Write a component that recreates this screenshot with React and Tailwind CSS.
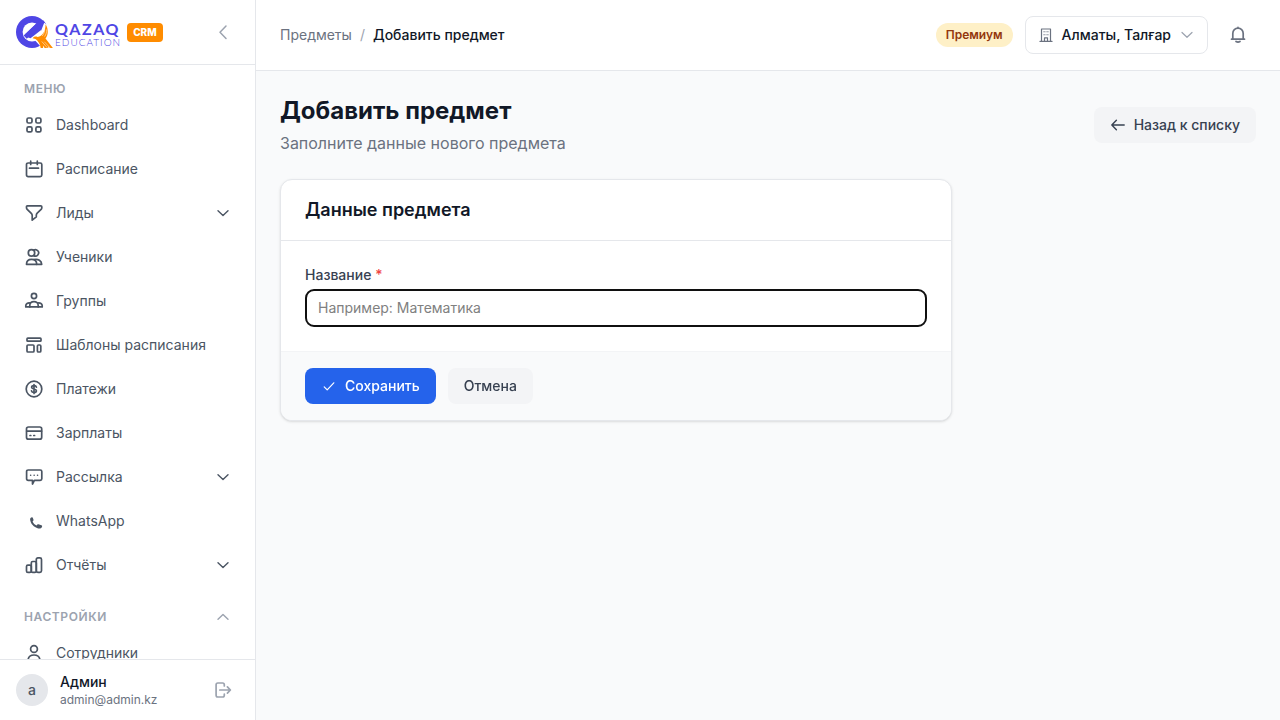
import { useState } from "react";

function Icon({ children, size = 20, className = "" }) {
  return (
    <svg
      width={size}
      height={size}
      viewBox={`0 0 ${size} ${size}`}
      fill="none"
      stroke="currentColor"
      strokeWidth={size === 20 ? 1.7 : 1.4}
      strokeLinecap="round"
      strokeLinejoin="round"
      aria-hidden="true"
      className={`shrink-0 ${className}`}
    >
      {children}
    </svg>
  );
}

const icons = {
  grid: (
    <>
      <rect x="3" y="3" width="5" height="5" rx="1.5" />
      <rect x="11.9" y="3" width="5" height="5" rx="1.5" />
      <rect x="3" y="11.9" width="5" height="5" rx="1.5" />
      <rect x="11.9" y="11.9" width="5" height="5" rx="1.5" />
    </>
  ),
  calendar: (
    <>
      <rect x="2.5" y="4" width="15.3" height="13.6" rx="1.6" />
      <path d="M6.7 2.2v3.3M13.3 2.2v3.3M5.5 9.2h9" />
    </>
  ),
  funnel: (
    <path d="M3.4 2.8h13.4q1 0 1 1v.9q0 1-.7 1.7l-3.9 3.7q-.9.9-.9 2.1v1.7L8.2 17.2v-4.7q0-1.2-.9-2.1L3.2 6.4q-.7-.7-.7-1.7v-.9q0-1 .9-1Z" />
  ),
  students: (
    <>
      <circle cx="7.5" cy="5.9" r="3.2" />
      <path d="M9.6 3.2a3.2 3.2 0 1 1 0 5.3" />
      <path d="M2.5 17.3c0-3.1 2.1-5 5.1-5s5.1 1.9 5.1 5Z" />
      <path d="M10.2 12.5c4-.8 7.4 1.2 7.5 4.8h-5" />
    </>
  ),
  groups: (
    <>
      <circle cx="10" cy="5" r="2.6" />
      <path d="M5.8 15.9v-1.5c0-2.2 1.7-3.7 4.2-3.7s4.2 1.5 4.2 3.7v1.5" />
      <path d="M6.3 12c-2.7-.5-4.5.7-4.5 2.7v1.2h16.4v-1.2c0-2-1.8-3.2-4.5-2.7" />
    </>
  ),
  template: (
    <>
      <rect x="3" y="3.2" width="14" height="3" rx=".8" />
      <rect x="3" y="10" width="7" height="7" rx="1" />
      <rect x="13.4" y="10" width="3.4" height="7" rx="1" />
    </>
  ),
  dollar: (
    <>
      <circle cx="10" cy="10" r="7.8" />
      <path d="M12.4 8.1c-.2-.9-1.1-1.5-2.4-1.5-1.4 0-2.4.6-2.4 1.6 0 2.3 4.8 1.2 4.8 3.5 0 1-1 1.7-2.4 1.7s-2.3-.6-2.5-1.6M10 5.5v9" />
    </>
  ),
  card: (
    <>
      <rect x="2.5" y="4" width="15.2" height="12.2" rx="2" />
      <path d="M2.7 8.2h14.8M6 12.5h.8M9.8 12.5h.8" />
    </>
  ),
  message: (
    <>
      <path d="M4.2 3h12q1.6 0 1.6 1.6v7.2q0 1.6-1.6 1.6h-5.8L8.5 17v-3.6H4.2q-1.6 0-1.6-1.6V4.6Q2.6 3 4.2 3Z" />
      <path d="M6.6 8.2h.1M10.1 8.2h.1M13.5 8.2h.1" strokeWidth="1.5" />
    </>
  ),
  phone: (
    <path
      d="M6.1 8.6C6 7.2 6.8 6.2 8 6.2c.5 0 .8.3.9.8l.6 1.7c.1.5 0 .8-.3 1.1l-.6.6c.8 1.8 2.1 3.2 4 4l.8-.8c.3-.3.7-.5 1.1-.3l2.9.9c.6.2.9.6.7 1.2-.4 1.7-2 2.5-4 2-4.3-1.1-7.5-4.5-8-8.8Z"
      fill="currentColor"
      stroke="none"
    />
  ),
  chart: (
    <>
      <rect x="2.5" y="10.2" width="4.8" height="7.2" rx="1.4" />
      <rect x="7.3" y="6.5" width="5" height="10.9" rx="1.4" />
      <rect x="12.3" y="2.8" width="5.2" height="14.6" rx="1.6" />
    </>
  ),
  user: (
    <>
      <circle cx="10" cy="6" r="3.4" />
      <path d="M4 17.2c.3-3.3 2.5-5.2 6-5.2s5.7 1.9 6 5.2" />
    </>
  ),
};

const menuItems = [
  { name: "Dashboard", icon: "grid" },
  { name: "Расписание", icon: "calendar" },
  { name: "Лиды", icon: "funnel", expandable: true },
  { name: "Ученики", icon: "students" },
  { name: "Группы", icon: "groups" },
  { name: "Шаблоны расписания", icon: "template" },
  { name: "Платежи", icon: "dollar" },
  { name: "Зарплаты", icon: "card" },
  { name: "Рассылка", icon: "message", expandable: true },
  { name: "WhatsApp", icon: "phone" },
  { name: "Отчёты", icon: "chart", expandable: true },
];

function Logo() {
  return (
    <a href="#" className="flex items-center gap-1.5">
      <span className="flex items-center gap-px">
        <svg width="38" height="32" viewBox="0 0 38 32" aria-hidden="true">
          <circle cx="16" cy="16" r="16" fill="#4f46e5" />
          <circle cx="16" cy="16" r="9.4" fill="#fff" />
          <path d="M27.5 4.6 31 9.5 14.5 22.2 9.3 20.5 9.2 18.2 21.6 6.2Z" fill="#4f46e5" />
          <path d="M28.2 6.8 38 13v19H26l-8.8-9.5 8-8Z" fill="#fff" />
          <path d="M9.2 21.2 21.5 9.6" stroke="#4f46e5" strokeWidth="4.6" />
          <path
            d="M29.6 8.2c2.8 4.5 3.1 10.2-.1 14.2L36.9 32h-3.1l-2.1-1.8.8 1.8h-3.8l-1.8-2.6.2 2.6h-2.4c-.4-3.8-2.3-6.8-5.2-9l-2.9-.8c1.1-1.6 3.1-2 5-1.2 4.8-1 7.9-5.6 8-12.8Z"
            fill="#ff8c00"
          />
          <path
            d="M28.7 13.2c.1 2.5-.9 5-2.5 6.8M30.7 13.4c.1 2.7-.6 5.1-2.1 7.2M25.8 25.5l5.6 6.4M28.3 25.7l5.8 6.2"
            stroke="#fff"
            strokeWidth=".5"
            fill="none"
          />
        </svg>
        <span className="flex flex-col pt-1 font-['Lato',sans-serif] text-[#4f46e5]">
          <span className="text-base leading-4 font-bold tracking-widest">QAZAQ</span>
          <span className="text-[10px] leading-[10px] font-light tracking-widest">EDUCATION</span>
        </span>
      </span>
      <span className="rounded bg-[#ff8c00] px-1.5 py-0.5 text-[10px] leading-[15px] font-extrabold text-white">
        CRM
      </span>
    </a>
  );
}

function NavItem({ name, icon, expandable }) {
  const content = (
    <>
      <Icon>{icons[icon]}</Icon>
      <span className="flex-1 text-left">{name}</span>
      {expandable && (
        <Icon size={16}>
          <path d="M3 5.7l5 4.8 5-4.8" />
        </Icon>
      )}
    </>
  );
  const classes =
    "flex h-10 w-full items-center gap-3 rounded-lg px-3 text-sm text-[#4b5563] hover:bg-gray-100";

  return (
    <li>
      {expandable ? (
        <button type="button" className={classes}>{content}</button>
      ) : (
        <a href="#" className={classes}>{content}</a>
      )}
    </li>
  );
}

function Sidebar() {
  const [settingsOpen, setSettingsOpen] = useState(true);

  return (
    <aside className="flex w-64 shrink-0 flex-col border-r border-[#e5e7eb] bg-white">
      <div className="flex h-[65px] shrink-0 items-center justify-between border-b border-[#e5e7eb] px-4">
        <Logo />
        <button type="button" aria-label="Свернуть меню" className="p-1.5 text-[#9ca3af]">
          <Icon>
            <path d="M13 4l-6 6.2 6 6.2" strokeWidth="1.5" />
          </Icon>
        </button>
      </div>

      <nav className="min-h-0 flex-1 overflow-y-auto px-3 py-4 [scrollbar-width:none]">
        <h2 className="mb-2 px-3 text-xs font-semibold tracking-wider text-[#9ca3af]">МЕНЮ</h2>
        <ul className="space-y-1">
          {menuItems.map((item) => (
            <NavItem key={item.name} {...item} />
          ))}
        </ul>

        <button
          type="button"
          onClick={() => setSettingsOpen(!settingsOpen)}
          className="mt-6 mb-2 flex w-full items-center justify-between px-3 text-xs font-semibold tracking-wider text-[#9ca3af]"
        >
          НАСТРОЙКИ
          <Icon size={16}>
            <path d="M3 10.3l5-4.8 5 4.8" />
          </Icon>
        </button>
        {settingsOpen && (
          <ul>
            <NavItem name="Сотрудники" icon="user" />
          </ul>
        )}
      </nav>

      <div className="flex shrink-0 items-center gap-3 border-t border-[#e5e7eb] px-4 py-3">
        <div className="flex size-8 items-center justify-center rounded-full bg-[#e5e7eb] text-sm font-medium text-[#4b5563]">
          a
        </div>
        <div className="min-w-0 flex-1">
          <p className="text-sm font-medium text-[#111827]">Админ</p>
          <p className="text-xs text-[#6b7280]">admin@admin.kz</p>
        </div>
        <button type="button" aria-label="Выйти" className="p-1.5 text-[#9ca3af]">
          <Icon>
            <path d="M11.3 6V4.7Q11.3 3 9.6 3H4.8Q3.1 3 3.1 4.7v10.6Q3.1 17 4.8 17h4.8q1.7 0 1.7-1.7V14M6.8 10h10.4M14.4 6.8l3 3.2-3 3.2" />
          </Icon>
        </button>
      </div>
    </aside>
  );
}

function Header() {
  return (
    <header className="flex items-center justify-between border-b border-[#e5e7eb] bg-white px-6 py-4">
      <nav className="flex items-center gap-2 text-sm text-[#6b7280]">
        <a href="#">Предметы</a>
        <span className="text-[#9ca3af]">/</span>
        <span className="font-medium text-[#111827]">Добавить предмет</span>
      </nav>

      <div className="flex items-center gap-3">
        <span className="rounded-full bg-[#fef0c7] px-2.5 py-1 text-xs font-semibold text-[#93370d]">
          Премиум
        </span>
        <button
          type="button"
          className="flex items-center gap-2 rounded-lg border border-[#e5e7eb] px-3 py-2 text-sm font-medium text-[#111827]"
        >
          <Icon size={16} className="text-[#6b7280]">
            <path d="M2 14.4h12M3.5 14V2h9v12M6.5 14v-3.2h3V14" strokeWidth="1.2" />
            <path d="M5.9 4.8h.4M9.7 4.8h.4M5.9 7.7h.4M9.7 7.7h.4M8 4.8h.1M8 7.7h.1" strokeWidth="1.1" />
          </Icon>
          Алматы, Талғар
          <Icon size={16} className="text-[#9ca3af]">
            <path d="M3 5.5l5 4.8 5-4.8" strokeWidth="1.2" />
          </Icon>
        </button>
        <button type="button" aria-label="Уведомления" className="p-2 text-[#6b7280]">
          <Icon>
            <path d="M3.5 14.2h13M4.8 14V8.4a5.2 5.2 0 0 1 10.4 0V14M10 2.4v.6M8 16.5q2 1.2 4 0" />
          </Icon>
        </button>
      </div>
    </header>
  );
}

export default function App() {
  const [title, setTitle] = useState("");

  return (
    <div className="flex h-screen bg-[#f9fafb] font-['Inter',sans-serif]">
      <Sidebar />

      <div className="flex min-w-0 flex-1 flex-col">
        <Header />

        <main className="flex-1 overflow-auto p-6">
          <div className="mb-6 flex items-center justify-between">
            <div>
              <h1 className="text-2xl font-bold text-[#111827]">Добавить предмет</h1>
              <p className="mt-1 text-base text-[#6b7280]">Заполните данные нового предмета</p>
            </div>
            <a
              href="#"
              className="flex items-center gap-2 rounded-lg bg-[#f3f4f6] px-4 py-2 text-sm font-medium text-[#374151]"
            >
              <Icon size={16}>
                <path d="M14.2 8H1.8M6.4 3.2L1.8 8l4.6 4.8" />
              </Icon>
              Назад к списку
            </a>
          </div>

          <form
            onSubmit={(e) => e.preventDefault()}
            className="max-w-2xl overflow-hidden rounded-xl border border-[#e5e7eb] bg-white shadow-sm"
          >
            <div className="border-b border-[#e5e7eb] px-6 py-4">
              <h2 className="text-lg font-semibold text-[#111827]">Данные предмета</h2>
            </div>

            <div className="p-6">
              <label htmlFor="title" className="mb-1 block text-sm font-medium text-[#374151]">
                Название <span className="text-[#ef4444]">*</span>
              </label>
              <input
                id="title"
                type="text"
                autoFocus
                value={title}
                onChange={(e) => setTitle(e.target.value)}
                placeholder="Например: Математика"
                className="block w-full rounded-lg border border-[#d1d5db] px-3 py-2 text-sm text-[#111827] placeholder:text-[#808080]"
              />
            </div>

            <div className="flex items-center gap-3 border-t border-[#f3f4f6] bg-[#f9fafb] px-6 py-4">
              <button
                type="submit"
                className="flex items-center gap-2 rounded-lg bg-[#2563eb] px-4 py-2 text-sm font-medium text-white"
              >
                <Icon size={16}>
                  <path d="M3.2 8.8l3 3 6.6-7" strokeWidth="1.2" />
                </Icon>
                Сохранить
              </button>
              <a
                href="#"
                className="rounded-lg bg-[#f3f4f6] px-4 py-2 text-sm font-medium text-[#374151]"
              >
                Отмена
              </a>
            </div>
          </form>
        </main>
      </div>
    </div>
  );
}
